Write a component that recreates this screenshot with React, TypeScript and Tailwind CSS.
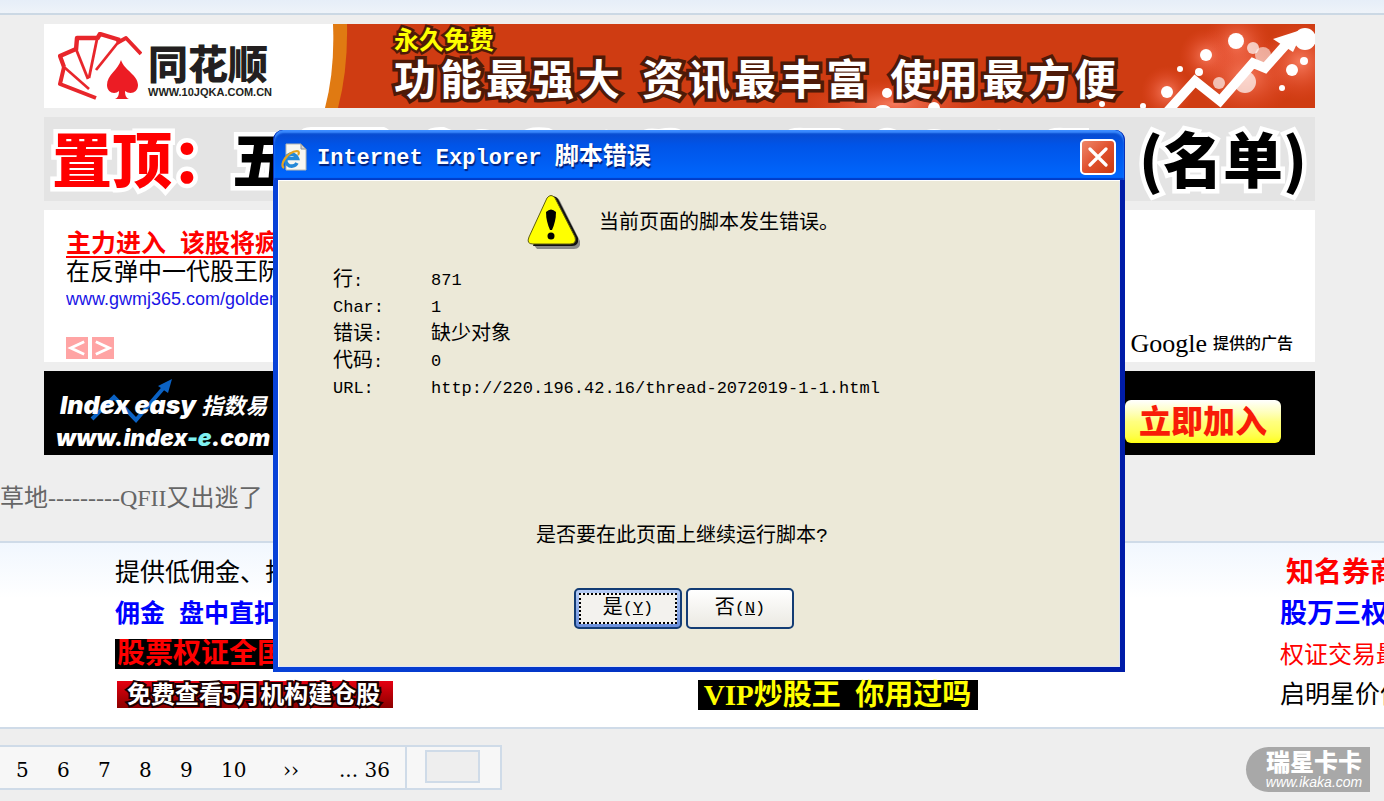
import React from "react";

const SANS = "font-['Liberation_Sans','Noto_Sans_CJK_SC',sans-serif]";
const MONO = "font-['Liberation_Mono','Noto_Sans_CJK_SC',monospace]";

function CardsLogo() {
  return (
    <svg viewBox="0 0 84 70" className="h-[70px] w-[84px] shrink-0" aria-hidden="true">
      <g fill="none" stroke="#e8262b" strokeLinejoin="round">
        <path d="M38 66L2 52L6 35" strokeWidth="4" />
        <path d="M6 35L2 24L18 17" strokeWidth="4.2" />
        <path d="M18 18L19 6H39" strokeWidth="4.4" />
        <path d="M39 7L42 2L62 8" strokeWidth="4.4" />
        <path d="M59 11L68 6L83 22" strokeWidth="3.8" />
        <path d="M6 35L31 57" strokeWidth="2.6" />
        <path d="M18 17L30 47" strokeWidth="2.8" />
        <path d="M39 7L31 46" strokeWidth="2.8" />
        <path d="M62 8L38 38" strokeWidth="2.8" />
      </g>
      <path d="M63 28C66 38 80 43 80 53C80 61 72 63 67 59C67 63 68 66 71 67H57C60 66 61 63 61 59C57 63 49 61 49 53C49 43 60 38 63 28Z" fill="#ec1c24" />
    </svg>
  );
}

function ArrowArt() {
  return (
    <svg viewBox="0 0 530 84" className="absolute right-0 bottom-0 h-[84px] w-[530px]" aria-hidden="true">
      <defs>
        <radialGradient id="glow">
          <stop offset="0" stopColor="#ff8a70" stopOpacity=".8" />
          <stop offset="1" stopColor="#e8492b" stopOpacity="0" />
        </radialGradient>
      </defs>
      <g fill="url(#glow)">
        <ellipse cx="110" cy="80" rx="90" ry="24" />
        <circle cx="452" cy="20" r="34" />
        <circle cx="422" cy="32" r="28" />
        <ellipse cx="460" cy="52" rx="52" ry="40" />
        <circle cx="515" cy="38" r="40" />
        <circle cx="382" cy="68" r="26" />
      </g>
      <g fill="#fff">
        <circle cx="102" cy="69" r="5" />
        <circle cx="151" cy="51" r="5" />
        <circle cx="149" cy="84" r="6" />
        <ellipse cx="98" cy="86" rx="8" ry="5" />
        <circle cx="317" cy="80" r="3" />
        <circle cx="358" cy="82" r="3" />
        <circle cx="382" cy="68" r="6" />
        <circle cx="395" cy="45" r="3" />
        <circle cx="414" cy="48" r="4" />
        <circle cx="421" cy="31" r="6" />
        <circle cx="451" cy="17" r="8" />
        <circle cx="520" cy="15" r="11" />
        <circle cx="507" cy="46" r="6" />
        <circle cx="519" cy="37" r="4" />
        <circle cx="497" cy="64" r="3" />
        <circle cx="468" cy="24" r="6" opacity=".7" />
        <circle cx="478" cy="31" r="8" opacity=".55" />
        <circle cx="434" cy="59" r="6" opacity=".65" />
        <circle cx="460" cy="58" r="11" opacity=".7" />
      </g>
      <path d="M382 88L410 57L435 77L468 39L480 44L504 17" fill="none" stroke="#fff" strokeWidth="9.5" />
      <path d="M488 15L519 5L508 28Z" fill="#fff" />
    </svg>
  );
}

function WarningIcon() {
  return (
    <svg viewBox="0 0 54 56" className="h-14 w-[54px] shrink-0" aria-hidden="true">
      <path d="M25 5Q29 0 33 7L53 47Q54 55 47 55H10L6 50Z" fill="#8a8a88" />
      <path d="M24 4Q27 0 31 5L51 44Q52 52 45 52H6Z" fill="#111" />
      <path d="M20 4Q24 -1 28 4L48 43Q50 50 43 50H6Q-1 50 2 43Z" fill="#ff0" stroke="#5f5c10" strokeWidth="1" />
      <path d="M19 18Q24 13 29 18Q29 27 25 36H23Q19 27 19 18Z" fill="#000" />
      <circle cx="24" cy="42" r="3.5" fill="#000" />
    </svg>
  );
}

function IEIcon() {
  return (
    <svg viewBox="0 0 26 28" className="h-7 w-[26px] shrink-0" aria-hidden="true">
      <path d="M5 1H20L25 6V27H5Z" fill="#f7f7f2" stroke="#b9b9b0" />
      <path d="M20 1V6H25Z" fill="#cfd2d6" stroke="#8f9296" />
      <path d="M16 20A6 6 0 1 1 16.500 15.500H6" fill="none" stroke="#2589d8" strokeWidth="3.6" />
      <path d="M3 25C-2 22 6 9 16 8C18 8 18.500 10 17 12" fill="none" stroke="#e3a421" strokeWidth="2.2" />
    </svg>
  );
}

function ErrorRow({ label, value }: { label: React.ReactNode; value: React.ReactNode }) {
  return (
    <div className="flex h-[27px]">
      <dt className="w-[98px]">{label}</dt>
      <dd>{value}</dd>
    </div>
  );
}

function Cjk({ children }: { children: string }) {
  return <span className="text-[20px]">{children}</span>;
}

function ErrorDialog() {
  return (
    <div
      role="dialog"
      aria-labelledby="dialog-title"
      className={`absolute top-[130px] left-[273px] w-[852px] rounded-t-[10px] bg-linear-to-r from-[#0842d8] to-[#001ca8] px-[5px] pb-[5px] text-[20px] text-black ${MONO}`}
    >
      <header className="-mx-[5px] flex h-[50px] items-center rounded-t-[10px] border-x border-[#0831b8] bg-linear-to-b from-[#0a48c8] via-[#0054e8] via-30% to-[#0068ff] pt-1 pr-2 pl-[7px] shadow-[inset_0_3px_2px_#3c8cff,inset_0_-2px_1px_#003cc8]">
        <IEIcon />
        <h1
          id="dialog-title"
          className="ml-2.5 flex-1 pt-0.5 text-[22px] leading-8 font-bold text-white [text-shadow:1px_2px_1px_#00207c]"
        >
          Internet Explorer <span className="text-[24px]">脚本错误</span>
        </h1>
        <button
          type="button"
          aria-label="关闭"
          className="flex size-9 items-center justify-center rounded-[5px] border-2 border-white bg-linear-to-br from-[#ee8668] via-[#e0502c] to-[#c93a10]"
        >
          <svg viewBox="0 0 20 20" className="size-5" aria-hidden="true">
            <path d="M2 2L18 18M18 2L2 18" stroke="#fff" strokeWidth="3.2" strokeLinecap="round" />
          </svg>
        </button>
      </header>
      <div className="flex flex-col bg-[#ece9d8] shadow-[inset_1px_1px_0_#fff,inset_-1px_-1px_0_#dfe6f4]">
        <div className="mt-3.5 ml-[249px] flex items-center gap-[18px]">
          <WarningIcon />
          <p className="pt-1">当前页面的脚本发生错误。</p>
        </div>
        <dl className="mt-[17px] ml-[55px] text-[17px] leading-[27px]">
          <ErrorRow label={<><Cjk>行</Cjk>:</>} value="871" />
          <ErrorRow label="Char:" value="1" />
          <ErrorRow label={<><Cjk>错误</Cjk>:</>} value={<Cjk>缺少对象</Cjk>} />
          <ErrorRow label={<><Cjk>代码</Cjk>:</>} value="0" />
          <ErrorRow label="URL:" value="http://220.196.42.16/thread-2072019-1-1.html" />
        </dl>
        <p className="mt-[120px] ml-[258px]">是否要在此页面上继续运行脚本?</p>
        <div className="mt-9 mb-[38px] ml-[296px] flex gap-1 text-[17px]">
          <button
            type="button"
            className="h-[41px] w-[108px] rounded-[5px] border-2 border-[#133c74] bg-linear-to-b from-[#b6cdf6] to-[#6a8fdc] p-[3px]"
          >
            <span className="flex h-full items-center justify-center border-2 border-dotted border-black bg-[#f3f2ee]">
              <Cjk>是</Cjk>(<u>Y</u>)
            </span>
          </button>
          <button
            type="button"
            className="flex h-[41px] w-[108px] items-center justify-center rounded-[5px] border-2 border-[#133c74] bg-linear-to-b from-white to-[#ebe9e2]"
          >
            <Cjk>否</Cjk>(<u>N</u>)
          </button>
        </div>
      </div>
    </div>
  );
}

function Slogan({ text }: { text: string }) {
  return (
    <span className="flex gap-1">
      {text.split("").map((c, i) => (
        <span key={i}>{c}</span>
      ))}
    </span>
  );
}

function Banners() {
  return (
    <div className="mr-[69px] ml-11 flex flex-col gap-[9px]">
      <section className="relative flex h-[84px] overflow-hidden bg-[#cf3c12]">
        <ArrowArt />
        <svg viewBox="0 0 310 84" className="absolute top-0 left-0 h-[84px] w-[310px]" aria-hidden="true">
          <path d="M0 0H303Q304 46 294 84H0Z" fill="#e07a12" />
          <path d="M0 0H289Q291 46 281 84H0Z" fill="#fff" />
        </svg>
        <div className="relative flex w-[350px] shrink-0 gap-1.5 pt-2 pl-3.5">
          <CardsLogo />
          <div className="flex flex-col pt-3.5 text-[#231f20]">
            <span className="text-[40px] leading-[38px] font-black">同花顺</span>
            <span className="text-[11px] leading-4 font-bold">WWW.10JQKA.COM.CN</span>
          </div>
        </div>
        <div className="relative whitespace-nowrap">
          <p className="text-[25px] leading-[32px] font-bold text-[#ff0] [-webkit-text-stroke:5px_#4e1a08] [paint-order:stroke_fill]">
            永久免费
          </p>
          <p className="flex gap-[22px] text-[42px] leading-[50px] font-bold text-white [-webkit-text-stroke:7px_#4e1a08] [paint-order:stroke_fill]">
            <Slogan text="功能最强大" />
            <Slogan text="资讯最丰富" />
            <Slogan text="使用最方便" />
          </p>
        </div>
      </section>

      <section className="relative flex h-[84px] items-center justify-between bg-[#e4e4e4] pr-2 pb-1 pl-2 font-['Noto_Sans_CJK_SC',sans-serif] text-[60px] leading-[80px] font-black whitespace-nowrap text-black [-webkit-text-stroke:9px_#fff] [paint-order:stroke_fill]">
        <svg viewBox="0 0 800 8" className="absolute top-2 left-[250px] h-2 w-[800px]" aria-hidden="true">
          <g fill="#fff" stroke="none">
            <path d="M5 8Q8 1 20 2H90Q96 4 96 8ZM130 8Q135 1 150 2L165 8ZM175 8Q185 0 205 8ZM225 8Q235 0 255 3L265 8ZM305 8Q312 1 320 8ZM345 8Q350 2 365 4Q385 0 390 8ZM425 8Q432 2 442 8ZM490 8Q495 2 510 3H545L560 8ZM580 8Q590 0 600 4L610 8ZM625 8Q640 0 655 8ZM695 8Q705 1 715 8ZM750 8Q755 2 770 3H795V8Z" />
          </g>
        </svg>
        <span className="relative flex">
          <span className="text-[#f00]">置顶：</span>
          <span>五</span>
        </span>
        <span>(名单)</span>
      </section>

      <section className={`flex h-[152px] items-end justify-between bg-white pr-[22px] pl-[22px] ${SANS}`}>
        <div className="flex w-60 flex-col overflow-hidden whitespace-nowrap">
          <a href="#" className="text-[25px] leading-[28px] font-bold whitespace-pre text-[#f00] underline decoration-2 underline-offset-4">
            {"主力进入  该股将疯"}
          </a>
          <span className="text-[24px] leading-[30px] text-black">在反弹中一代股王阮</span>
          <a href="#" className="text-[18px] leading-6 text-[#1a14e6]">
            www.gwmj365.com/golden
          </a>
          <div className="mt-[26px] mb-[3px] flex gap-1">
            <button type="button" aria-label="上一页" className="size-[22px] bg-[#ffa4a4]">
              <svg viewBox="0 0 23 23" aria-hidden="true">
                <path d="M19 5L5 11.500L19 18" fill="none" stroke="#fff" strokeWidth="3" />
              </svg>
            </button>
            <button type="button" aria-label="下一页" className="size-[22px] bg-[#ffa4a4]">
              <svg viewBox="0 0 23 23" aria-hidden="true">
                <path d="M4 5L18 11.500L4 18" fill="none" stroke="#fff" strokeWidth="3" />
              </svg>
            </button>
          </div>
        </div>
        <p className="mb-0.5 flex items-center gap-1.5 text-black">
          <span className="font-['Liberation_Serif',serif] text-[26px] leading-8">Google</span>
          <span className="text-[16px] font-medium">提供的广告</span>
        </p>
      </section>

      <section className={`relative flex h-[84px] items-center justify-between bg-black pr-[34px] pl-3 text-white ${SANS}`}>
        <svg viewBox="0 0 84 48" className="absolute top-2 left-[46px] h-12 w-[84px]" aria-hidden="true">
          <path d="M2 40L24 18L46 41L76 6" fill="none" stroke="#0b62c4" strokeWidth="4" />
          <path d="M82 0L68 7L78 14Z" fill="#0b62c4" />
        </svg>
        <div className="relative flex flex-col pt-4 font-['Inter','Noto_Sans_CJK_SC',sans-serif] text-[23px] leading-8 font-black whitespace-nowrap italic">
          <span className="pl-1 text-[25px]">
            Index easy <span className="text-[22px] font-bold">指数易</span>
          </span>
          <span>
            www.index<span className="text-[#7ff0f0]">-e</span>.com
          </span>
        </div>
        <button
          type="button"
          className="mt-4 h-[43px] w-[156px] rounded-md bg-linear-to-b from-white via-[#ffff80] to-[#ff0] pt-0.5 text-[32px] leading-[41px] font-black text-[#f81c08]"
        >
          立即加入
        </button>
      </section>
    </div>
  );
}

function TextAds() {
  return (
    <section
      className={`flex h-[188px] justify-between overflow-hidden border-y-2 border-[#cfdbe8] bg-white bg-linear-to-b from-[#f1f7fe] to-white to-30% pl-[115px] whitespace-nowrap ${SANS}`}
    >
      <div className="flex w-[280px] flex-col text-[25px] text-black">
        <a href="#" className="mt-2 leading-[42px]">提供低佣金、折</a>
        <a href="#" className="leading-[41px] font-bold whitespace-pre text-[#00f]">{"佣金  盘中直扣"}</a>
        <a href="#" className="mt-[5px] w-[180px] overflow-hidden bg-black pl-0.5 text-[28px] leading-[30px] font-bold text-[#f00]">
          股票权证全国
        </a>
        <a
          href="#"
          className="mt-3 ml-0.5 w-[276px] bg-linear-to-b from-[#e60012] to-[#8c0000] pl-2.5 text-[24px] leading-[27px] font-bold text-white [-webkit-text-stroke:4px_#1a0000] [paint-order:stroke_fill]"
        >
          免费查看5月机构建仓股
        </a>
      </div>
      <div className="flex flex-col justify-end pb-[17px]">
        <a href="#" className="w-[280px] bg-black text-center font-['Liberation_Serif','Noto_Sans_CJK_SC',serif] text-[29px] leading-[30px] font-bold whitespace-pre text-[#ff0]">
          {"VIP炒股王  你用过吗"}
        </a>
      </div>
      <div className="flex w-[104px] flex-col text-black">
        <a href="#" className="mt-2 pl-1.5 text-[28px] leading-[43px] font-bold text-[#f00]">知名券商</a>
        <a href="#" className="text-[27px] leading-[40px] font-bold text-[#00f]">股万三权</a>
        <a href="#" className="text-[24px] leading-[42px] text-[#f00]">权证交易最</a>
        <a href="#" className="text-[25px] leading-[36px]">启明星价值</a>
      </div>
    </section>
  );
}

function Pager() {
  return (
    <nav
      aria-label="分页"
      className="flex h-[45px] w-[502px] border-2 border-l-0 border-[#cfdbe8] bg-[#f7f7f7] font-['DejaVu_Serif',serif] text-[20px] leading-[48px] text-black"
    >
      <div className="flex w-[407px] shrink-0 items-center border-r-2 border-[#cfdbe8] pt-1 pl-4">
        {["5", "6", "7", "8", "9"].map((n) => (
          <a key={n} href="#" className="w-[41px]">{n}</a>
        ))}
        <a href="#" className="w-[62px]">10</a>
        <a href="#" className="w-[56px]">››</a>
        <a href="#" className="whitespace-nowrap">... 36</a>
      </div>
      <div className="flex flex-1 items-start pt-[3px] pl-[18px]">
        <input aria-label="页码" className="h-[33px] w-[55px] border-2 border-[#cfdbe8] bg-[#eee]" />
      </div>
    </nav>
  );
}

export default function App() {
  return (
    <main className={`relative flex min-h-screen flex-col overflow-hidden bg-[#eee] ${SANS}`}>
      <div className="mb-[9px] h-[15px] border-b-2 border-[#cbd8e4] bg-linear-to-b from-[#e6eef8] to-[#eef3f9]" />
      <Banners />
      <p className="my-[22px] h-[42px] font-['Liberation_Serif','Noto_Sans_CJK_SC',serif] text-[24px] leading-[42px] whitespace-nowrap text-[#666]">
        草地---------QFII又出逃了
      </p>
      <TextAds />
      <div className="mt-4">
        <Pager />
      </div>
      <ErrorDialog />
      <a
        href="#"
        className="absolute right-[14px] bottom-[9px] flex h-[45px] w-[124px] flex-col items-center justify-center rounded-l-full bg-[#a8a8a8] pl-3 text-white"
      >
        <span className="text-[24px] leading-[24px] font-black">瑞星卡卡</span>
        <span className="text-[14px] leading-[14px] italic">www.ikaka.com</span>
      </a>
    </main>
  );
}
